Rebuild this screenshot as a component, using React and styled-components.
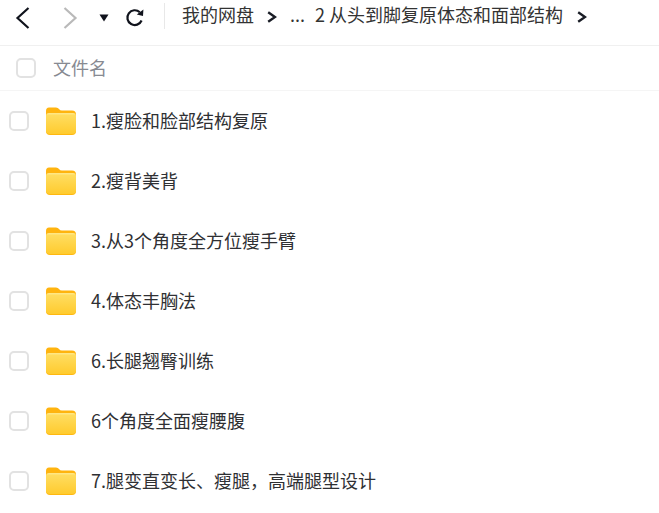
import React from 'react';
import styled, { createGlobalStyle } from 'styled-components';

const GlobalStyle = createGlobalStyle`
  html, body {
    margin: 0;
    padding: 0;
    background: #fff;
    overflow: hidden;
  }
  body {
    font-family: "Noto Sans CJK SC", "Liberation Sans", sans-serif;
  }
`;

const Page = styled.div`
  width: 659px;
  height: 513px;
  overflow: hidden;
  background: #fff;
`;

const Toolbar = styled.div`
  height: 45px;
  display: flex;
  align-items: flex-start;
  border-bottom: 1px solid #f0f0f0;
`;

const NavGroup = styled.div`
  display: flex;
  align-items: center;
  height: 35px;
`;

const NavButton = styled.span`
  display: flex;
  width: ${(p) => p.$width}px;
  justify-content: center;
  color: ${(p) => (p.$muted ? '#b9b9b9' : '#10131c')};
`;

const Divider = styled.div`
  width: 1px;
  height: 26px;
  margin: 3px 17px 0 8px;
  background: #e8e8e8;
`;

const Crumbs = styled.div`
  display: flex;
  align-items: center;
  height: 27px;
  font-size: 18px;
  color: #333;
  white-space: nowrap;
`;

const Crumb = styled.span`
  margin: 0 ${(p) => p.$right}px 0 ${(p) => p.$left || 0}px;
`;

const ChevronSvg = styled.svg`
  flex: none;
  margin-top: 7px;
`;

const HeaderRow = styled.div`
  height: 44px;
  display: flex;
  align-items: center;
  padding-left: 16px;
  border-bottom: 1px solid #f5f5f5;
`;

const HeaderLabel = styled.span`
  margin-left: 17px;
  padding-bottom: 2px;
  font-size: 18px;
  color: #878a92;
`;

const Box = styled.span`
  box-sizing: border-box;
  flex: none;
  width: 20px;
  height: 20px;
  border: 2px solid #e2e2e2;
  border-radius: 5px;
  background: #fff;
`;

const List = styled.div`
  display: flex;
  flex-direction: column;
`;

const Row = styled.div`
  height: 60px;
  display: flex;
  align-items: center;
  padding-left: 9px;
`;

const Name = styled.span`
  margin-left: 15px;
  padding-bottom: 2px;
  font-size: 18px;
  color: #2f3033;
  white-space: nowrap;
`;

const FolderSvg = styled.svg`
  flex: none;
  margin-left: 17px;
`;

const items = [
  '1.瘦脸和脸部结构复原',
  '2.瘦背美背',
  '3.从3个角度全方位瘦手臂',
  '4.体态丰胸法',
  '6.长腿翘臀训练',
  '6个角度全面瘦腰腹',
  '7.腿变直变长、瘦腿，高端腿型设计',
];

const Back = () => (
  <svg width="18" height="24" viewBox="0 0 18 24" fill="none" stroke="currentColor" strokeWidth="2.2">
    <path d="M14.5 2 L3.5 12 L14.5 22" />
  </svg>
);

const Forward = () => (
  <svg width="18" height="24" viewBox="0 0 18 24" fill="none" stroke="currentColor" strokeWidth="2.2">
    <path d="M3.5 2 L14.5 12 L3.5 22" />
  </svg>
);

const Caret = () => (
  <svg width="10" height="8" viewBox="0 0 10 8" fill="currentColor">
    <path d="M0.5 0.5 H9.5 L5 7.5 Z" />
  </svg>
);

const Reload = () => (
  <svg width="20" height="20" viewBox="0 0 20 20" fill="none" stroke="currentColor" strokeWidth="2.2">
    <path d="M16.6 12.5 A7.4 7.4 0 1 1 14.8 4.2" />
    <path d="M18.4 1.6 L18 8 L11.8 6.6 Z" fill="currentColor" stroke="none" />
  </svg>
);

const Chevron = () => (
  <ChevronSvg width="10" height="12" viewBox="0 0 10 12" fill="none" stroke="#1a1d26" strokeWidth="2.4">
    <path d="M1.2 1.2 L8 6 L1.2 10.8" />
  </ChevronSvg>
);

const Folder = () => (
  <FolderSvg width="30" height="28" viewBox="0 0 30 28">
    <defs>
      <linearGradient id="folderFront" x1="0" y1="0" x2="0" y2="1">
        <stop offset="0" stopColor="#ffe98c" />
        <stop offset="0.12" stopColor="#ffdc5e" />
        <stop offset="1" stopColor="#ffcb2e" />
      </linearGradient>
    </defs>
    <path d="M0 4 Q0 0.5 3 0.5 H10 Q12 0.5 13 2 Q14 3.5 16 3.5 H26 Q30 3.5 30 7.5 V14 H0 Z" fill="#ffb40f" />
    <path d="M0 24 Q0 28 4 28 H26 Q30 28 30 24 V18 H0 Z" fill="#ffb80f" />
    <path d="M0 9 Q0 6 3 6 H27 Q30 6 30 9 V23.5 Q30 27 26 27 H4 Q0 27 0 23.5 Z" fill="url(#folderFront)" />
  </FolderSvg>
);

export default function App() {
  return (
    <Page>
      <GlobalStyle />
      <Toolbar>
        <NavGroup>
          <NavButton $width={46}><Back /></NavButton>
          <NavButton $width={48} $muted><Forward /></NavButton>
          <NavButton $width={20}><Caret /></NavButton>
          <NavButton $width={42}><Reload /></NavButton>
        </NavGroup>
        <Divider />
        <Crumbs>
          <Crumb $right={13}>我的网盘</Crumb>
          <Chevron />
          <Crumb $left={13} $right={10}>...</Crumb>
          <Crumb $right={14}>2 从头到脚复原体态和面部结构</Crumb>
          <Chevron />
        </Crumbs>
      </Toolbar>
      <HeaderRow>
        <Box />
        <HeaderLabel>文件名</HeaderLabel>
      </HeaderRow>
      <List>
        {items.map((name) => (
          <Row key={name}>
            <Box />
            <Folder />
            <Name>{name}</Name>
          </Row>
        ))}
      </List>
    </Page>
  );
}
